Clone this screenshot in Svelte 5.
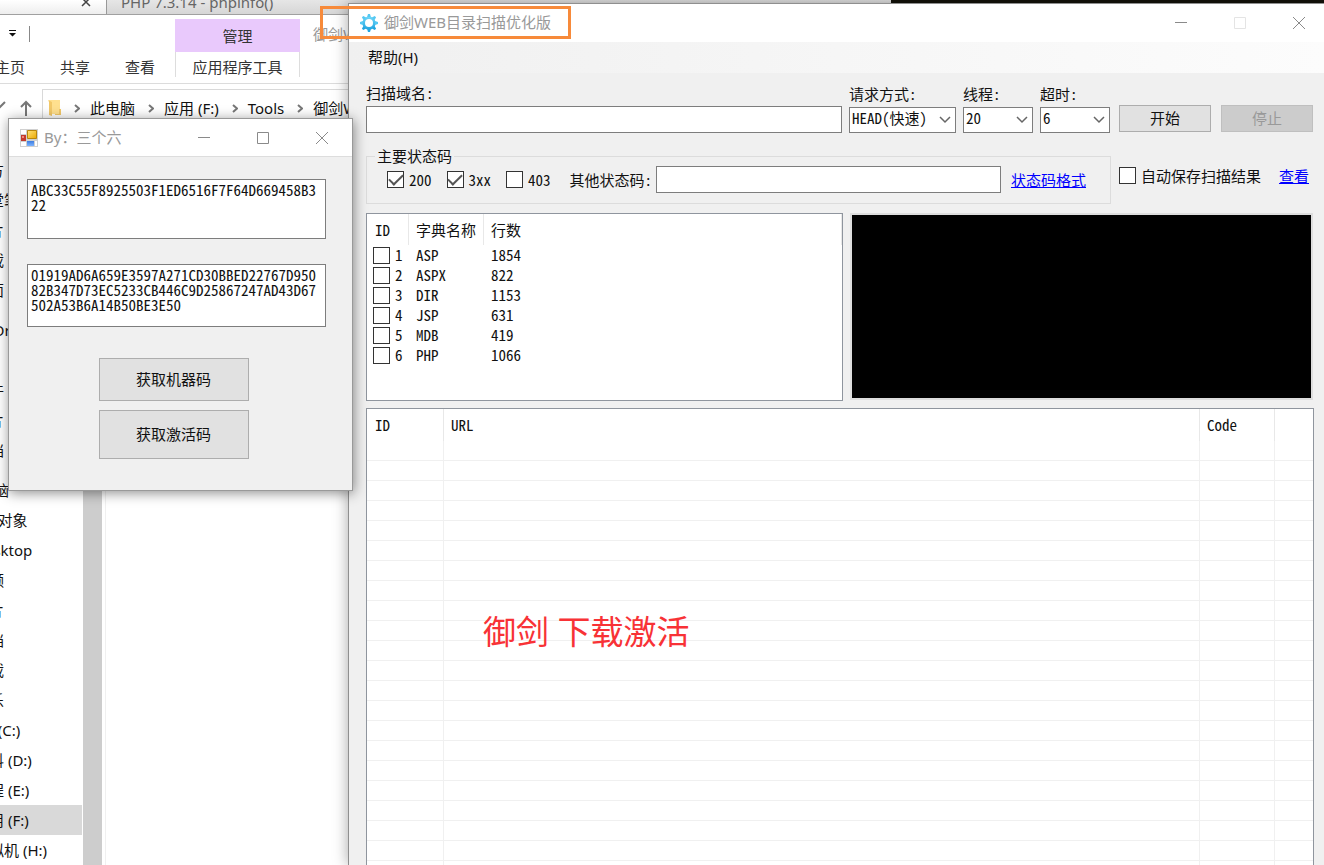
<script>
  const sidebar = [
    { items: ['官方', '课堂笔记', '图片', '下载', '桌面'] },
    { head: 'OneDrive', items: ['', '附件', '图片', '文档'] },
    {
      head: '此电脑',
      items: ['3D 对象', 'Desktop', '视频', '图片', '文档', '下载', '音乐', 'OS (C:)', '资料 (D:)', '工程 (E:)', '应用 (F:)', '虚拟机 (H:)']
    }
  ];
  const crumbs = ['此电脑', '应用 (F:)', 'Tools', '御剑WEB目录扫描优化版'];
  const dictionaries = [
    ['ASP', 1854],
    ['ASPX', 822],
    ['DIR', 1153],
    ['JSP', 631],
    ['MDB', 419],
    ['PHP', 1066]
  ];
  const emptyRows = Array.from({ length: 30 }, (_, i) => i);

  let statusCodes = $state([
    { code: '200', on: true },
    { code: '3xx', on: true },
    { code: '403', on: false }
  ]);
  let machineCode = $state('ABC33C55F8925503F1ED6516F7F64D669458B3\n22');
  let activationCode = $state(
    '01919AD6A659E3597A271CD30BBED22767D950\n82B347D73EC5233CB446C9D25867247AD43D67\n502A53B6A14B50BE3E50'
  );
</script>

{#snippet windowButtons(dimMax)}
  <div class="win-buttons">
    <button aria-label="最小化"><svg width="12" height="12" viewBox="0 0 12 12"><path d="M0 5.500H12" /></svg></button>
    <button aria-label="最大化" class:dim={dimMax}><svg width="12" height="12" viewBox="0 0 12 12"><path d="M.5.5h11v11H.5z" /></svg></button>
    <button aria-label="关闭"><svg width="12" height="12" viewBox="0 0 12 12"><path d="M0 0L12 12M12 0L0 12" /></svg></button>
  </div>
{/snippet}

{#snippet dropdown(id, value)}
  <div class="dropdown">
    <select {id}><option>{value}</option></select>
    <svg width="12" height="8" viewBox="0 0 12 8"><path d="M1 1l5 5 5-5" /></svg>
  </div>
{/snippet}

<div class="desktop">
  <div class="browser">
    <div class="tab active">
      <svg width="10" height="10" viewBox="0 0 10 10"><path d="M1 1l8 8M9 1L1 9" /></svg>
    </div>
    <div class="tab">PHP 7.3.14 - phpinfo()</div>
    <div class="dark"></div>
  </div>

  <section class="explorer">
    <div class="ribbon-top">
      <svg class="qat" width="7" height="7" viewBox="0 0 7 7"><path d="M0 0h7v1H0zM0 3h7L3.500 6.500z" /></svg>
      <i class="qat-line"></i>
      <span class="manage">管理</span>
      <span class="path-title">御剑WEB目录扫描优化版</span>
    </div>
    <nav class="ribbon-tabs">
      <button>主页</button><button>共享</button><button>查看</button><button class="tools">应用程序工具</button>
    </nav>
    <div class="address-row">
      <svg class="arrows" width="34" height="18" viewBox="0 0 34 18"><path d="M-4 5l4 4 5-5" /><path d="M26 18V4M21 9l5-5 5 5" /></svg>
      <div class="address">
        <svg width="13" height="18" viewBox="0 0 13 18"><path fill="#ffe08f" d="M1 1h11v14H1z" /><path fill="#f2c869" d="M0 1l4 2v14l-3-1V3zM11 10h2v6h-6v-1h4z" /></svg>
        {#each crumbs as crumb}
          <svg class="sep" width="6" height="9" viewBox="0 0 6 9"><path d="M1 1l4 3.500L1 8" /></svg>
          <span>{crumb}</span>
        {/each}
      </div>
    </div>
    <div class="explorer-body">
      <div class="tree">
        {#each sidebar as group}
          <ul>
            {#if group.head}<li class="head">{group.head}</li>{/if}
            {#each group.items as item}<li class:selected={item === '应用 (F:)'}>{item}</li>{/each}
          </ul>
        {/each}
      </div>
      <div class="scrollbar"></div>
      <div class="files"></div>
    </div>
  </section>

  <main class="scanner">
    <header>
      <svg width="18" height="18" viewBox="-9 -9 18 18">
        <defs><linearGradient id="gear" x1="0" y1="0" x2="0" y2="1"><stop offset="0" stop-color="#70d8fa" /><stop offset="1" stop-color="#22a6e0" /></linearGradient></defs>
        <circle r="6.600" fill="url(#gear)" />
        {#each [0, 45, 90, 135, 180, 225, 270, 315] as a}
          <path d="M-1.900-6L-1-9H1L1.900-6z" transform="rotate({a})" fill={a > 90 && a < 270 ? '#22a6e0' : '#55c8f2'} />
        {/each}
        <circle r="4" fill="#fff" />
      </svg>
      <h1>御剑WEB目录扫描优化版</h1>
      {@render windowButtons(true)}
    </header>
    <div class="menu"><button>帮助(H)</button></div>

    <div class="content">
      <div class="query">
        <div class="field domain"><label for="domain">扫描域名:</label><input id="domain" type="text" /></div>
        <div class="field method"><label for="method">请求方式:</label>{@render dropdown('method', 'HEAD(快速)')}</div>
        <div class="field"><label for="threads">线程:</label>{@render dropdown('threads', '20')}</div>
        <div class="field"><label for="timeout">超时:</label>{@render dropdown('timeout', '6')}</div>
        <div class="actions">
          <button class="push">开始</button>
          <button class="push" disabled>停止</button>
        </div>
      </div>

      <div class="filters">
        <fieldset>
          <legend>主要状态码</legend>
          <div class="codes">
            {#each statusCodes as s}
              <label><input type="checkbox" bind:checked={s.on} />{s.code}</label>
            {/each}
            <label for="other" class="other">其他状态码:</label>
            <input id="other" type="text" />
            <a href="#format">状态码格式</a>
          </div>
        </fieldset>
        <div class="autosave">
          <label><input type="checkbox" />自动保存扫描结果</label>
          <a href="#results">查看</a>
        </div>
      </div>

      <div class="panels">
        <div class="list">
          <table class="dict">
            <thead><tr><th class="c-id">ID</th><th class="c-name">字典名称</th><th>行数</th></tr></thead>
            <tbody>
              {#each dictionaries as [name, lines], i}
                <tr>
                  <td><label><input type="checkbox" />{i + 1}</label></td>
                  <td>{name}</td>
                  <td>{lines}</td>
                </tr>
              {/each}
            </tbody>
          </table>
        </div>
        <div class="console"></div>
      </div>

      <div class="results">
        <table>
          <thead><tr><th class="r-id">ID</th><th>URL</th><th class="r-code">Code</th><th class="r-end"></th></tr></thead>
          <tbody>
            {#each emptyRows as row (row)}<tr><td></td><td></td><td></td><td></td></tr>{/each}
          </tbody>
        </table>
      </div>
    </div>
  </main>

  <section class="keygen">
    <header>
      <svg width="18" height="18" viewBox="0 0 18 18">
        <defs>
          <linearGradient id="gold" x1="0" y1="0" x2="1" y2="1"><stop offset="0" stop-color="#ffe27a" /><stop offset="1" stop-color="#eaa800" /></linearGradient>
          <linearGradient id="blue" x1="0" y1="0" x2="0" y2="1"><stop offset="0" stop-color="#3c7ce0" /><stop offset="1" stop-color="#7eb4ff" /></linearGradient>
        </defs>
        <path fill="#d0d0d0" d="M0 0h18v18H0z" />
        <path fill="#fff" d="M1 1h5v4H1zM1 13h5v4H1zM15 12h2v5h-2z" />
        <path fill="#c33a2e" d="M1 6h5v6H1z" /><path fill="#ee8a78" d="M2 7h2v2H2z" />
        <path fill="url(#gold)" stroke="#b8860b" d="M7.500 1.500h9v8h-9z" />
        <path fill="url(#blue)" d="M7 12h7v5H7z" />
      </svg>
      <h2>By：三个六</h2>
      {@render windowButtons(false)}
    </header>
    <div class="keygen-body">
      <textarea aria-label="机器码" rows="3" bind:value={machineCode}></textarea>
      <textarea aria-label="激活码" rows="4" class="second" bind:value={activationCode}></textarea>
      <button class="push">获取机器码</button>
      <button class="push tall">获取激活码</button>
    </div>
  </section>

  <div class="frame"></div>
  <p class="caption">御剑 下载激活</p>
</div>

<style>
  :global(body) { margin: 0; }
  * { box-sizing: border-box; }
  button, input, select, textarea { font: inherit; font-feature-settings: inherit; color: inherit; margin: 0; border-radius: 0; }
  button { background: none; border: 0; padding: 0; }
  svg { display: block; flex: none; }
  h1, h2, p, ul { margin: 0; padding: 0; font-weight: 400; }

  .desktop {
    position: relative;
    height: 100vh;
    overflow: hidden;
    background: #fff;
    color: #111;
    font: 15px/20px "Noto Sans", "Noto Sans CJK SC", sans-serif;
    white-space: nowrap;
  }

  .browser { display: flex; height: 15px; background: linear-gradient(#e6e6e6, #d6d6d6); border-bottom: 1px solid #a0a0a0; overflow: hidden; }
  .tab { flex: 1; padding-left: 14px; color: #666; line-height: 4px; border-left: 1px solid #999; }
  .tab.active { flex: none; width: 106px; padding: 0 0 0 81px; background: linear-gradient(#fff, #eee); border: 0; }
  .tab svg { margin-top: -3px; fill: none; stroke: #444; stroke-width: 1.500; }
  .dark { width: 433px; background: #14120a; }

  .explorer { position: absolute; top: 15px; bottom: 0; left: -60px; width: 410px; background: #fff; overflow: hidden; display: flex; flex-direction: column; }
  .ribbon-top { display: flex; height: 37px; padding-left: 69px; align-items: center; }
  .qat { fill: #111; }
  .qat-line { flex: none; width: 1px; height: 16px; margin-left: 13px; background: #888; }
  .manage { flex: none; width: 125px; margin: 4px 13px 0 145px; height: 33px; line-height: 34px; text-align: center; background: #e9c9fc; color: #333; }
  .path-title { color: #999; }
  .ribbon-tabs { display: flex; height: 32px; padding-left: 55px; border-bottom: 1px solid #dcdcdc; color: #333; }
  .ribbon-tabs button { width: 30px; margin-right: 35px; height: 30px; }
  .ribbon-tabs .tools { width: 125px; margin: 0 0 0 -15px; height: 25px; padding-top: 5px; border: solid #ddd; border-width: 0 1px; }
  .address-row { display: flex; padding-top: 5px; height: 43px; }
  .arrows { margin: 9px 8px 0 60px; fill: none; stroke: #777; stroke-width: 2; }
  .address { flex: 1; display: flex; align-items: center; height: 38px; padding-left: 5px; border: 1px solid #d9d9d9; border-right: 0; color: #111; }
  .sep { margin: 0 10px 0 13px; fill: none; stroke: #777; stroke-width: 2; }
  .explorer-body { flex: 1; display: flex; min-height: 0; }
  .tree { width: 142px; padding-top: 28px; overflow: hidden; }
  .tree ul { list-style: none; padding-bottom: 10px; }
  .tree li { height: 30px; line-height: 30px; padding-left: 34px; }
  .tree .head { padding-left: 24px; }
  .tree .selected { background: #d9d9d9; }
  .scrollbar { width: 19px; margin-left: 1px; background: #cdcdcd; }
  .files { flex: 1; margin-left: 3px; border-left: 1px solid #f0f0f0; }

  header { display: flex; align-items: center; height: 38px; background: #fff; color: #999; }
  .win-buttons { display: flex; margin-left: auto; }
  .win-buttons button { width: 59px; height: 37px; display: grid; place-items: center; }
  .win-buttons svg { fill: none; stroke: #8a8a8a; }
  .win-buttons .dim svg { stroke: #e4e4e4; }
  h1, h2 { font-size: 15px; line-height: 18px; padding-bottom: 2px; margin-left: 6px; }

  .scanner { position: absolute; top: 3px; right: 0; bottom: 0; left: 348px; display: flex; flex-direction: column; overflow: hidden; background: #f0f0f0; border: solid #8f8f8f; border-width: 1px 0 0 1px; box-shadow: 0 0 14px rgba(0, 0, 0, 0.35); }
  .scanner > header { padding: 0 0 0 11px; }
  .scanner .win-buttons { margin-right: -4px; }
  .menu { height: 31px; padding: 5px 19px; background: linear-gradient(90deg, #f0f0f0, #fcfcfc); }
  .content, .keygen-body { font-family: "Noto Sans CJK SC", sans-serif; font-feature-settings: "hwid"; }
  .content { flex: 1; min-height: 0; display: flex; flex-direction: column; padding: 10px 11px 0 17px; }

  .query { display: flex; gap: 7px; align-items: flex-end; }
  .field { display: flex; flex-direction: column; gap: 3px; width: 70px; }
  .domain { flex: 1; min-width: 0; }
  .method { width: 107px; }
  .actions { display: flex; gap: 10px; margin: 0 0 1px 2px; }
  .actions .push { width: 92px; height: 27px; }
  input[type="text"], select, textarea { background: #fff; border: 1px solid #7d7d7d; outline: 0; }
  input[type="text"] { width: 100%; height: 27px; padding: 0 4px; }
  .dropdown { display: grid; }
  .dropdown > * { grid-area: 1 / 1; }
  .dropdown select { appearance: none; width: 100%; height: 26px; padding: 0 2px 4px; line-height: 20px; }
  .dropdown svg { justify-self: end; align-self: center; margin-right: 5px; fill: none; stroke: #666; stroke-width: 1.500; pointer-events: none; }
  .push { background: #e1e1e1; border: 1px solid #adadad; color: #111; padding-bottom: 2px; }
  .push:disabled { background: #ccc; border-color: #bfbfbf; color: #999; }

  .filters { display: flex; gap: 8px; margin-top: 14px; }
  fieldset { flex: 1; min-width: 0; margin: 0; padding: 1px 24px 10px 20px; border: 1px solid #dcdcdc; }
  legend { margin-left: -12px; padding: 0 2px; line-height: 18px; }
  .codes { display: flex; align-items: center; }
  label { display: flex; align-items: center; gap: 5px; }
  .codes label { margin-right: 15px; }
  .codes .other { margin: 0 4px 0 4px; }
  .codes input[type="text"] { flex: 1; min-width: 0; margin-right: 10px; }
  a { color: #00f; text-decoration: underline; }
  input[type="checkbox"] { appearance: none; display: grid; place-items: center; flex: none; width: 17px; height: 17px; border: 1px solid #333; background: #fff; }
  input[type="checkbox"]:checked::after { content: ""; width: 12px; height: 6px; margin-top: -4px; border: solid #555; border-width: 0 0 2px 2px; transform: rotate(-45deg); }
  .autosave { width: 194px; display: flex; align-items: center; justify-content: space-between; padding: 0 4px 0 0; }

  .panels { display: flex; gap: 9px; margin-top: 9px; height: 188px; flex: none; }
  .list, .results { background: #fff; border: 1px solid #8f959e; overflow: hidden; }
  .list { flex: 477; }
  .console { flex: 461; margin: 2px 2px 3px 0; background: #000; outline: 2px solid #ddd; }
  table { width: 100%; border-collapse: separate; border-spacing: 0; table-layout: fixed; }
  th { height: 31px; padding: 0 7px; text-align: left; font-weight: 400; border-right: 1px solid #e8e8e8; }
  td { height: 20px; line-height: 18px; padding: 0 7px; }
  .c-id { width: 42px; padding-left: 8px; }
  .c-name { width: 75px; }
  .dict td:first-child { padding: 0 0 0 6px; }
  .results { flex: none; margin: 7px -1px 0 0; }
  .results th { height: 32px; }
  .r-id { width: 77px; padding-left: 8px; }
  .r-code { width: 75px; }
  .r-end { width: 38px; border: 0; }
  .results td { border: solid #f0f0f0; border-width: 0 1px 1px 0; }
  .results td:last-child { border-right: 0; }

  .keygen { position: absolute; top: 118px; left: 8px; width: 345px; background: #f0f0f0; border: 1px solid #999; box-shadow: 1px 2px 12px rgba(0, 0, 0, 0.45); }
  .keygen header { padding: 0 1px 0 11px; border-bottom: 1px solid #ddd; }
  .keygen-body { display: flex; flex-direction: column; align-items: center; padding: 22px 26px 31px 18px; }
  textarea { width: 100%; height: 60px; padding: 2px 3px; line-height: 15px; resize: none; overflow: hidden; }
  .second { height: 63px; margin: 25px 0 31px; }
  .keygen .push { width: 150px; height: 43px; margin-right: 6px; }
  .keygen .tall { height: 49px; margin-top: 9px; }

  .frame { position: absolute; top: 6px; left: 320px; width: 251px; height: 33px; border: 3px solid #f78a3a; }
  .caption { position: absolute; top: 608px; left: 483px; font: 33px/48px "Noto Sans", "Noto Sans CJK SC", sans-serif; color: #f83236; }
</style>
